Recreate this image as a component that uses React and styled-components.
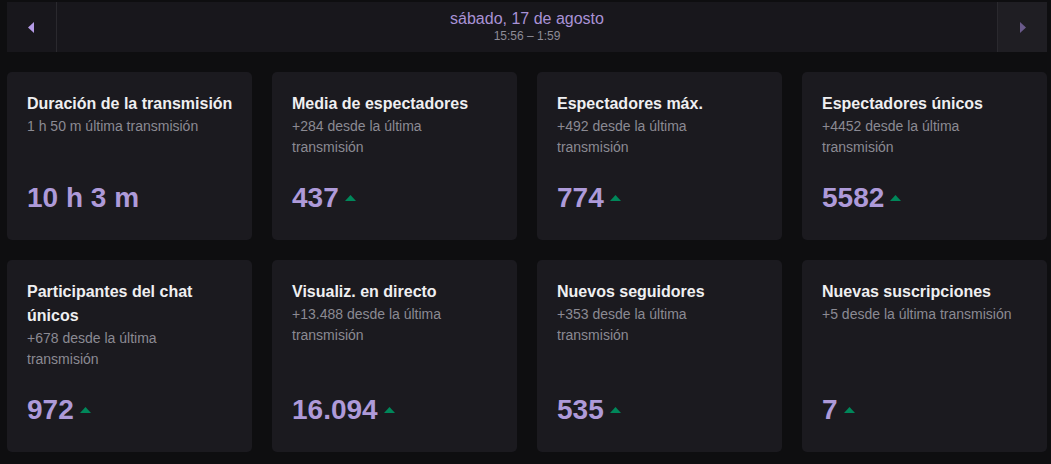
import styled, { createGlobalStyle } from "styled-components";

const GlobalStyle = createGlobalStyle`
  html, body {
    margin: 0;
    background: #0e0e10;
    font-family: "Liberation Sans", Arial, sans-serif;
  }
`;

const Page = styled.div`
  padding: 2px 4px 0 7px;
  display: flex;
  flex-direction: column;
  gap: 20px;
`;

const DateBar = styled.div`
  height: 50px;
  display: flex;
  background: #18171c;
`;

const NavButton = styled.button`
  width: 50px;
  flex: none;
  border: none;
  padding: 0;
  margin: 0;
  background: ${(p) => (p.disabled ? "#1f1e23" : "#18171c")};
  border-left: ${(p) => (p.side === "right" ? "1px solid #2a292e" : "none")};
  border-right: ${(p) => (p.side === "left" ? "1px solid #2a292e" : "none")};
  display: flex;
  align-items: center;
  justify-content: center;
  cursor: pointer;
`;

const DateLabel = styled.div`
  flex: 1;
  display: flex;
  flex-direction: column;
  align-items: center;
  justify-content: center;
  padding-bottom: 1px;
`;

const DateText = styled.div`
  font-size: 16px;
  line-height: 20px;
  color: #a992d6;
`;

const TimeText = styled.div`
  font-size: 12px;
  line-height: 15px;
  color: #8e8c96;
`;

const Grid = styled.div`
  display: grid;
  grid-template-columns: repeat(4, 245px);
  gap: 20px;
`;

const Card = styled.div`
  background: #1b1a1f;
  border-radius: 5px;
  padding: 20px 17px 24px 20px;
  display: flex;
  flex-direction: column;
`;

const Title = styled.div`
  font-size: 16px;
  font-weight: 700;
  line-height: 24px;
  color: #efeff1;
`;

const Sub = styled.div`
  font-size: 14px;
  line-height: 21px;
  color: #8b8a93;
  padding-right: 5px;
`;

const Value = styled.div`
  margin-top: auto;
  padding-top: 22px;
  display: flex;
  align-items: center;
  gap: 6px;
  font-size: 28px;
  font-weight: 700;
  line-height: 36px;
  color: #ae9ad9;
`;

const Arrow = ({ dir, color }) => (
  <svg width="7" height="11" viewBox="0 0 7 11">
    <path d={dir === "left" ? "M6 0 L0 5.5 L6 11 Z" : "M1 0 L7 5.5 L1 11 Z"} fill={color} />
  </svg>
);

const Up = () => (
  <svg width="11" height="6" viewBox="0 0 11 6">
    <path d="M0 6 L5.5 0 L11 6 Z" fill="#00875a" />
  </svg>
);

const stats = [
  { title: "Duración de la transmisión", sub: "1 h 50 m última transmisión", value: "10 h 3 m" },
  { title: "Media de espectadores", sub: "+284 desde la última transmisión", value: "437", up: true },
  { title: "Espectadores máx.", sub: "+492 desde la última transmisión", value: "774", up: true },
  { title: "Espectadores únicos", sub: "+4452 desde la última transmisión", value: "5582", up: true },
  { title: "Participantes del chat únicos", sub: "+678 desde la última transmisión", value: "972", up: true },
  { title: "Visualiz. en directo", sub: "+13.488 desde la última transmisión", value: "16.094", up: true },
  { title: "Nuevos seguidores", sub: "+353 desde la última transmisión", value: "535", up: true },
  { title: "Nuevas suscripciones", sub: "+5 desde la última transmisión", value: "7", up: true },
];

const App = () => {
  return (
    <Page>
      <GlobalStyle />
      <DateBar>
        <NavButton side="left">
          <Arrow dir="left" color="#b49ae6" />
        </NavButton>
        <DateLabel>
          <DateText>sábado, 17 de agosto</DateText>
          <TimeText>15:56 – 1:59</TimeText>
        </DateLabel>
        <NavButton side="right" disabled>
          <Arrow dir="right" color="#6a5a8b" />
        </NavButton>
      </DateBar>
      <Grid>
        {stats.map((s) => (
          <Card key={s.title}>
            <Title>{s.title}</Title>
            <Sub>{s.sub}</Sub>
            <Value>
              {s.value}
              {s.up && <Up />}
            </Value>
          </Card>
        ))}
      </Grid>
    </Page>
  );
};

export default App;
